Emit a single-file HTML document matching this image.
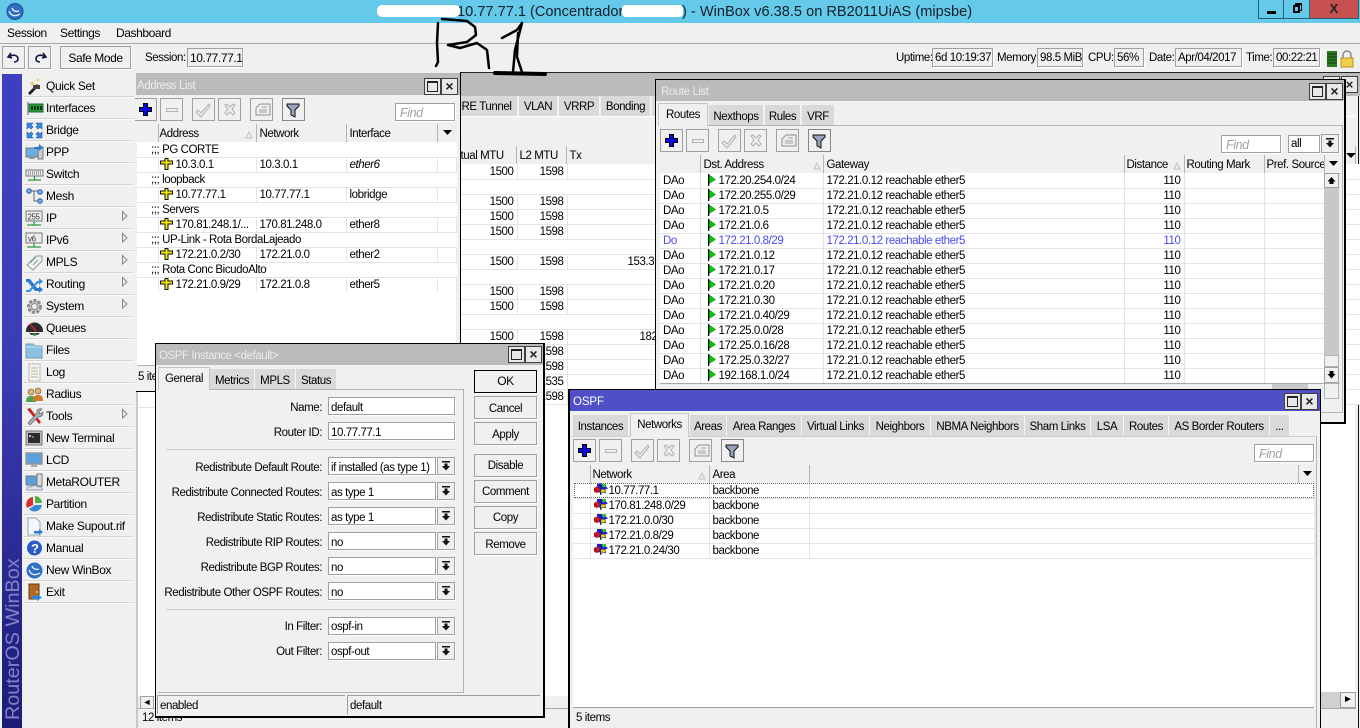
<!DOCTYPE html>
<html><head><meta charset="utf-8"><title>WinBox</title>
<style>
*{box-sizing:border-box}
html,body{margin:0;padding:0;width:1360px;height:728px;overflow:hidden;background:#f0f0f0}
body{position:relative;font:11.5px/14px "Liberation Sans",sans-serif;letter-spacing:-.42px;color:#000}
.a,.t,.tab,.b,.f,.g,.s{position:absolute}
.t{white-space:nowrap}
.g{background:#bbb}
.tl{position:absolute;color:#ececec;white-space:nowrap;line-height:14px}
.tab{background:#d9d9d9;text-align:center;white-space:nowrap;border-right:1px solid #f4f4f4;padding-top:2px}
.tab.on{background:#f0f0f0;border:1px solid #c4c4c4;border-bottom:0;z-index:2;padding-top:1px}
.b{background:#f0f0f0;border:1px solid #a0a0a0;text-align:center;white-space:nowrap;box-shadow:1px 1px 0 #fff}
.f{background:#fff;border:1px solid #a0a0a0;padding:1px 0 0 2px;white-space:nowrap;overflow:hidden;box-shadow:1px 1px 0 #fff}
.s{background:#f0f0f0;border:1px solid #a0a0a0;padding:1px 0 0 2px;white-space:nowrap;overflow:hidden}
.find{color:#a0a0a0;font-style:italic;font-size:12.5px;padding-left:4px}
table{position:absolute;border-collapse:collapse;table-layout:fixed;background:#fff}
td{height:15px;padding:0 0 0 3px;border:1px solid #e4e4e4;border-width:0 1px 1px 0;white-space:nowrap;overflow:hidden;line-height:14px}
tr:first-child td{padding-top:2px;line-height:12px}
.hd tr:first-child td{background:#f0f0f0;height:18px;border:0;border-right:1px solid #b4b4b4;border-bottom:1px solid #a0a0a0;padding-top:3px;line-height:14px;vertical-align:top}
td.n{text-align:right;padding-right:3px;padding-left:0}
td.c{padding-left:14px;border-right:0}
.bl td{color:#4a4af0}
td svg{vertical-align:1px;margin:-3px 3px -3px 0}
td svg.i{margin-left:-2px}
.hd td svg{margin:0;vertical-align:0}
.wb{position:absolute;width:17px;height:17px;border:1px solid #404040;background:#e8e8e8}
.m{position:absolute;left:46px;white-space:nowrap;letter-spacing:-.35px;font-size:12px}
.sep{position:absolute;left:24px;width:110px;height:1px;background:#d4d4d4;box-shadow:0 1px 0 #fafafa}
</style></head>
<body>
<svg width="0" height="0" style="position:absolute">
<defs>
<symbol id="da" viewBox="0 0 16 16"><path fill="#111" d="M4 3h8v1.500H4zM6.500 5.500h3V8H12l-4 4.500L4 8h2.500z"/></symbol>
<symbol id="fl" viewBox="0 0 9 12"><path d="M1 0h1.300v12H1z" fill="#000"/><path d="M2.300 1 8.500 5.500 2.300 9.500z" fill="#0c0" stroke="#060" stroke-width=".5"/></symbol>
<symbol id="ad" viewBox="0 0 13 12"><path d="M5 0.500h3v2.500h4.500v3H8v5.500H5V6H.5V3H5z" fill="#f4e60a" stroke="#111"/></symbol>
<symbol id="st" viewBox="0 0 14 14"><path d="M7 0l2 2.500 3-1 0 3 2 2-3 1 .5 3.500-3-1-2 3-1-3-3.500 1 1-3.500L0 6l3-1.500L3 1l3 1z" fill="#2020d0"/><path d="M7 0l2 2.500 3-1 0 3-3 1z" fill="#30c030"/><path d="M0 6l3-1.500L6 7 3.500 11 0 10z" fill="#e01818"/><path d="M7 7l4 .5.500 3.500-3-1-2 3z" fill="#eed810" stroke="#222" stroke-width=".6"/><path d="M0 7 3 9M6 2 8 7" stroke="#111" stroke-width=".6" fill="none"/></symbol>
<symbol id="tb" viewBox="0 0 172 24">
<g fill="#f0f0f0" stroke="#a0a0a0"><rect x=".5" y=".5" width="22" height="22"/><rect x="26.500" y=".5" width="22" height="22"/><rect x="58.500" y=".5" width="22" height="22"/><rect x="84.500" y=".5" width="22" height="22"/><rect x="116.500" y=".5" width="22" height="22"/><rect x="148.500" y=".5" width="22" height="22" stroke="#888"/></g>
<path d="M9.500 5.500h4v4h4v4h-4v4h-4v-4h-4v-4h4z" fill="#0a0ae0" stroke="#000"/>
<rect x="32.500" y="10.500" width="11" height="3" fill="#eee" stroke="#b4b4b4"/>
<path d="M64 12l3 3 8-9 1 2-9 11-5-5z" fill="#eee" stroke="#b0b0b0"/>
<path d="M91 7l2-1 3 3 3-3 2 1-3 4 3 4-2 2-3-3-3 3-2-2 3-4z" fill="#eee" stroke="#b0b0b0"/>
<path d="M122 10l4-4h10v11h-14z" fill="#eee" stroke="#909090"/><path d="M125 12h8M128 9h5M125 14h8" stroke="#a0a0a0"/>
<path d="M153 6h12v2l-4 4v7l-4-2v-5l-4-4z" fill="#9aa4c0" stroke="#111"/>
</symbol>
</defs>
</svg>

<!-- main bars -->
<div class="a" style="left:0;top:0;width:1360px;height:23px;background:#65c9ea"></div>
<div class="t" style="left:457px;top:4px;font-size:14.6px;letter-spacing:0;line-height:16px;color:#12202a">10.77.77.1 (Concentrador</div>
<div class="a" style="left:377px;top:5px;width:83px;height:12px;background:#fff;border-radius:5px"></div>
<div class="a" style="left:622px;top:5px;width:61px;height:12px;background:#fff;border-radius:4px"></div>
<div class="t" style="left:682px;top:4px;font-size:14.6px;letter-spacing:0;line-height:16px;color:#12202a">) - WinBox v6.38.5 on RB2011UiAS (mipsbe)</div>
<svg class="a" style="left:6px;top:3px" width="18" height="18"><circle cx="9" cy="8.500" r="8" fill="#2f6fc4" stroke="#1c4c94"/><path d="M3 8c2 5 6 6 11 3M6 5c1 3 4 4 7 3" stroke="#e8f2ff" stroke-width="1.300" fill="none"/></svg>
<!-- win buttons -->
<div class="a" style="left:1258px;top:0;width:26px;height:19px;border:1px solid #25607a;border-top:0;background:#65c9ea"></div>
<div class="a" style="left:1267px;top:11px;width:9px;height:3px;background:#000"></div>
<div class="a" style="left:1284px;top:0;width:26px;height:19px;border:1px solid #25607a;border-left:0;border-top:0;background:#65c9ea"></div>
<div class="a" style="left:1295px;top:3px;width:7px;height:8px;border:1px solid #000;border-top-width:2px"></div>
<div class="a" style="left:1293px;top:5px;width:7px;height:8px;border:2px solid #000;background:#65c9ea"></div>
<div class="a" style="left:1310px;top:0;width:49px;height:19px;background:#c75050;border-bottom:1px solid #25607a;border-right:1px solid #25607a;text-align:center;font:bold 13px/18px 'Liberation Sans',sans-serif;color:#222;letter-spacing:0">X</div>

<div class="t" style="left:7px;top:26px;font-size:12px">Session</div>
<div class="t" style="left:60px;top:26px;font-size:12px">Settings</div>
<div class="t" style="left:116px;top:26px;font-size:12px">Dashboard</div>
<div class="a" style="left:0;top:43px;width:1360px;height:1px;background:#a8a8a8"></div>

<div class="b" style="left:2px;top:46px;width:23px;height:23px"></div>
<svg class="a" style="left:6px;top:50px" width="16" height="16"><path d="M5 3L2 7l4 1M3 7c4-3 9-2 9 2 0 2-2 3-4 3" fill="none" stroke="#101840" stroke-width="1.600"/></svg>
<div class="b" style="left:28px;top:46px;width:23px;height:23px"></div>
<svg class="a" style="left:32px;top:50px" width="16" height="16"><path d="M11 3l3 4-4 1M13 7C9 4 4 5 4 9c0 2 2 3 4 3" fill="none" stroke="#101840" stroke-width="1.600"/></svg>
<div class="b" style="left:60px;top:46px;width:71px;height:23px;line-height:22px;font-size:12px">Safe Mode</div>
<div class="t" style="left:145px;top:51px">Session:</div>
<div class="f" style="left:187px;top:48px;width:56px;height:19px;line-height:17px;background:#f0f0f0;font-size:12px">10.77.77.1</div>

<div class="t" style="left:896px;top:51px">Uptime:</div><div class="f" style="left:932px;top:48px;width:61px;height:19px;line-height:17px;background:#f0f0f0">6d 10:19:37</div>
<div class="t" style="left:997px;top:51px">Memory:</div><div class="f" style="left:1037px;top:48px;width:46px;height:19px;line-height:17px;background:#f0f0f0">98.5 MiB</div>
<div class="t" style="left:1088px;top:51px">CPU:</div><div class="f" style="left:1114px;top:48px;width:30px;height:19px;line-height:17px;background:#f0f0f0">56%</div>
<div class="t" style="left:1149px;top:51px">Date:</div><div class="f" style="left:1175px;top:48px;width:67px;height:19px;line-height:17px;background:#f0f0f0">Apr/04/2017</div>
<div class="t" style="left:1246px;top:51px">Time:</div><div class="f" style="left:1273px;top:48px;width:47px;height:19px;line-height:17px;background:#f0f0f0">00:22:21</div>
<svg class="a" style="left:1326px;top:50px" width="30" height="18"><path d="M1 1h10v16H1z" fill="#2e7a1e"/><path d="M1 4h10M1 7h10M1 10h10M1 13h10" stroke="#143a10"/><path d="M17 8V5a4 4 0 0 1 8 0v3" fill="none" stroke="#888" stroke-width="1.500"/><rect x="15" y="8" width="12" height="9" fill="#f0d048" stroke="#b89020"/></svg>

<!-- background interface window -->
<div class="a" style="left:136px;top:72px;width:1224px;height:1px;background:#222"></div>
<div class="g" style="left:136px;top:73px;width:1224px;height:23px"></div>
<div class="wb" style="left:1323px;top:76px"></div><div class="wb" style="left:1341px;top:76px;text-align:center;font:bold 13px/15px 'Liberation Sans',sans-serif;letter-spacing:0;color:#222">×</div>
<div class="a" style="left:136px;top:96px;width:1224px;height:632px;background:#f0f0f0"></div>
<div class="a" style="left:1358px;top:96px;width:1px;height:632px;background:#111"></div>
<div class="tab" style="left:456px;top:96px;width:62px;height:20px;line-height:21px;padding-top:1px">RE Tunnel</div>
<div class="tab" style="left:519px;top:96px;width:39px;height:20px;line-height:21px;padding-top:1px">VLAN</div>
<div class="tab" style="left:559px;top:96px;width:41px;height:20px;line-height:21px;padding-top:1px">VRRP</div>
<div class="tab" style="left:601px;top:96px;width:50px;height:20px;line-height:21px;padding-top:1px">Bonding</div>
<div class="tab" style="left:652px;top:96px;width:10px;height:20px"></div>
<div class="a" style="left:138px;top:116px;width:1218px;height:1px;background:#fff"></div>
<table class="hd" style="left:138px;top:146px;width:1217px"><colgroup><col style="width:319px"><col style="width:59px"><col style="width:50px"><col style="width:789px"></colgroup>
<tr><td></td><td>tual MTU</td><td>L2 MTU</td><td>Tx</td></tr></table>
<div class="a" style="left:138px;top:164px;width:1217px;height:532px;background:#fff"></div>
<svg class="a" style="left:1346px;top:147px" width="10" height="16"><path d="M0 6h10L5 11z" fill="#000"/></svg>
<table style="left:457px;top:164px;width:903px"><colgroup><col style="width:60px"><col style="width:50px"><col style="width:793px"></colgroup>
<tr><td class="n">1500</td><td class="n">1598</td><td></td></tr>
<tr><td style="border-right:0"></td><td style="border-right:0"></td><td></td></tr>
<tr><td class="n">1500</td><td class="n">1598</td><td></td></tr>
<tr><td class="n">1500</td><td class="n">1598</td><td></td></tr>
<tr><td class="n">1500</td><td class="n">1598</td><td></td></tr>
<tr><td style="border-right:0"></td><td style="border-right:0"></td><td></td></tr>
<tr><td class="n">1500</td><td class="n">1598</td><td style="padding-left:60px">153.3</td></tr>
<tr><td style="border-right:0"></td><td style="border-right:0"></td><td></td></tr>
<tr><td class="n">1500</td><td class="n">1598</td><td></td></tr>
<tr><td class="n">1500</td><td class="n">1598</td><td></td></tr>
<tr><td style="border-right:0"></td><td style="border-right:0"></td><td></td></tr>
<tr><td class="n">1500</td><td class="n">1598</td><td style="padding-left:72px">182</td></tr>
<tr><td class="n"></td><td class="n">1598</td><td></td></tr>
<tr><td class="n"></td><td class="n">1598</td><td></td></tr>
<tr><td class="n"></td><td class="n">1535</td><td></td></tr>
<tr><td class="n"></td><td class="n">1598</td><td></td></tr>
</table>
<div class="a" style="left:136px;top:391px;width:2px;height:337px;background:#c8c8c8"></div>
<div class="a" style="left:138px;top:407px;width:20px;height:1px;background:#e4e4e4"></div>
<div class="a" style="left:1320px;top:692px;width:20px;height:16px;background:#d0d0d0"></div>
<div class="b" style="left:1340px;top:692px;width:16px;height:16px;line-height:14px;font-size:10px;letter-spacing:0">►</div>
<div class="b" style="left:140px;top:696px;width:14px;height:13px;line-height:11px;font-size:9px;letter-spacing:0">◄</div>
<div class="a" style="left:138px;top:708px;width:1218px;height:1px;background:#a8a8a8"></div>
<div class="t" style="left:142px;top:711px">12 items</div>

<!-- Address List -->
<div class="a" style="left:136px;top:72px;width:325px;height:320px;background:#f0f0f0;border-right:1px solid #000;border-bottom:1px solid #000"></div>
<div class="g" style="left:136px;top:73px;width:324px;height:22px"></div>
<div class="tl" style="left:137px;top:79px">Address List</div>
<div class="wb" style="left:424px;top:78px;padding:2px"><div style="width:11px;height:11px;border:1px solid #222;border-top-width:2px"></div></div>
<div class="wb" style="left:441px;top:78px;text-align:center;font:bold 14px/15px 'Liberation Sans',sans-serif;letter-spacing:0;color:#222">×</div>
<svg class="a" style="left:134px;top:98px" width="172" height="24"><use href="#tb"/></svg>
<div class="f find" style="left:395px;top:103px;width:60px;height:18px;line-height:17px">Find</div>
<table class="hd" style="left:137px;top:124px;width:319px"><colgroup><col style="width:21px"><col style="width:98px"><col style="width:90px"><col style="width:91px"><col style="width:19px"></colgroup>
<tr><td></td><td style="padding-left:1px">Address</td><td>Network</td><td>Interface</td><td style="border-right:0;padding:3px 0 0 4px"><svg width="11" height="8"><path d="M1 1h9L5.500 6z" fill="#000"/></svg></td></tr></table>
<svg class="a" style="left:245px;top:131px" width="8" height="8"><path d="M4 1l3 6H1z" fill="none" stroke="#c0c0c0"/></svg>
<table style="left:137px;top:142px;width:319px"><colgroup><col style="width:21px"><col style="width:98px"><col style="width:90px"><col style="width:91px"><col style="width:19px"></colgroup>
<tr><td class="c" colspan="5">;;; PG CORTE</td></tr>
<tr><td></td><td><svg class="i" width="13" height="12"><use href="#ad"/></svg>10.3.0.1</td><td>10.3.0.1</td><td><i>ether6</i></td><td></td></tr>
<tr><td class="c" colspan="5">;;; loopback</td></tr>
<tr><td></td><td><svg class="i" width="13" height="12"><use href="#ad"/></svg>10.77.77.1</td><td>10.77.77.1</td><td>lobridge</td><td></td></tr>
<tr><td class="c" colspan="5">;;; Servers</td></tr>
<tr><td></td><td><svg class="i" width="13" height="12"><use href="#ad"/></svg>170.81.248.1/...</td><td>170.81.248.0</td><td>ether8</td><td></td></tr>
<tr><td class="c" colspan="5">;;; UP-Link - Rota BordaLajeado</td></tr>
<tr><td></td><td><svg class="i" width="13" height="12"><use href="#ad"/></svg>172.21.0.2/30</td><td>172.21.0.0</td><td>ether2</td><td></td></tr>
<tr><td class="c" colspan="5">;;; Rota Conc BicudoAlto</td></tr>
<tr><td></td><td><svg class="i" width="13" height="12"><use href="#ad"/></svg>172.21.0.9/29</td><td>172.21.0.8</td><td>ether5</td><td></td></tr>
</table>
<div class="a" style="left:137px;top:292px;width:319px;height:74px;background:#fff;border-bottom:1px solid #b0b0b0"></div>
<div class="t" style="left:138px;top:370px">5 items</div>

<!-- Route List -->
<div class="a" style="left:655px;top:79px;width:691px;height:345px;background:#f0f0f0;border:1px solid #000;border-width:1px 2px 2px 1px"></div>
<div class="g" style="left:656px;top:80px;width:688px;height:21px"></div>
<div class="tl" style="left:661px;top:85px">Route List</div>
<div class="wb" style="left:1309px;top:83px;padding:2px"><div style="width:11px;height:11px;border:1px solid #222;border-top-width:2px"></div></div>
<div class="wb" style="left:1326px;top:83px;text-align:center;font:bold 14px/15px 'Liberation Sans',sans-serif;letter-spacing:0;color:#222">×</div>
<div class="a" style="left:658px;top:125px;width:685px;height:288px;border:1px solid #b4b4b4;border-width:1px 1px 1px 0"></div>
<div class="tab on" style="left:658px;top:103px;width:50px;height:23px;line-height:21px">Routes</div>
<div class="tab" style="left:709px;top:105px;width:55px;height:20px;line-height:21px">Nexthops</div>
<div class="tab" style="left:765px;top:105px;width:36px;height:20px;line-height:21px">Rules</div>
<div class="tab" style="left:802px;top:105px;width:33px;height:20px;line-height:21px">VRF</div>
<svg class="a" style="left:660px;top:129px" width="172" height="24"><use href="#tb"/></svg>
<div class="f find" style="left:1221px;top:135px;width:60px;height:18px;line-height:17px">Find</div>
<div class="f" style="left:1288px;top:135px;width:32px;height:18px;line-height:15px">all</div>
<div class="b" style="left:1321px;top:134px;width:18px;height:19px"><svg width="16" height="16" style="display:block"><use href="#da"/></svg></div>
<table class="hd" style="left:660px;top:155px;width:680px"><colgroup><col style="width:40px"><col style="width:123px"><col style="width:301px"><col style="width:60px"><col style="width:80px"><col style="width:60px"><col style="width:16px"></colgroup>
<tr><td></td><td>Dst. Address</td><td>Gateway</td><td style="padding-left:2px">Distance</td><td style="padding-left:2px">Routing Mark</td><td style="padding-left:2px">Pref. Source</td><td style="border-right:0;padding:3px 0 0 3px"><svg width="11" height="8"><path d="M1 1h9L5.500 6z" fill="#000"/></svg></td></tr></table>
<svg class="a" style="left:813px;top:162px" width="8" height="8"><path d="M4 1l3 6H1z" fill="none" stroke="#c0c0c0"/></svg>
<svg class="a" style="left:1173px;top:162px" width="8" height="8"><path d="M4 1l3 6H1z" fill="none" stroke="#c0c0c0"/></svg>
<table style="left:660px;top:173px;width:664px"><colgroup><col style="width:40px"><col style="width:123px"><col style="width:301px"><col style="width:60px"><col style="width:80px"><col style="width:60px"></colgroup>
<tr><td>DAo</td><td style="padding-left:6px"><svg width="9" height="12"><use href="#fl"/></svg>172.20.254.0/24</td><td>172.21.0.12 reachable ether5</td><td class="n">110</td><td></td><td></td></tr>
<tr><td>DAo</td><td style="padding-left:6px"><svg width="9" height="12"><use href="#fl"/></svg>172.20.255.0/29</td><td>172.21.0.12 reachable ether5</td><td class="n">110</td><td></td><td></td></tr>
<tr><td>DAo</td><td style="padding-left:6px"><svg width="9" height="12"><use href="#fl"/></svg>172.21.0.5</td><td>172.21.0.12 reachable ether5</td><td class="n">110</td><td></td><td></td></tr>
<tr><td>DAo</td><td style="padding-left:6px"><svg width="9" height="12"><use href="#fl"/></svg>172.21.0.6</td><td>172.21.0.12 reachable ether5</td><td class="n">110</td><td></td><td></td></tr>
<tr class="bl"><td>Do</td><td style="padding-left:6px"><svg width="9" height="12"><use href="#fl"/></svg>172.21.0.8/29</td><td>172.21.0.12 reachable ether5</td><td class="n">110</td><td></td><td></td></tr>
<tr><td>DAo</td><td style="padding-left:6px"><svg width="9" height="12"><use href="#fl"/></svg>172.21.0.12</td><td>172.21.0.12 reachable ether5</td><td class="n">110</td><td></td><td></td></tr>
<tr><td>DAo</td><td style="padding-left:6px"><svg width="9" height="12"><use href="#fl"/></svg>172.21.0.17</td><td>172.21.0.12 reachable ether5</td><td class="n">110</td><td></td><td></td></tr>
<tr><td>DAo</td><td style="padding-left:6px"><svg width="9" height="12"><use href="#fl"/></svg>172.21.0.20</td><td>172.21.0.12 reachable ether5</td><td class="n">110</td><td></td><td></td></tr>
<tr><td>DAo</td><td style="padding-left:6px"><svg width="9" height="12"><use href="#fl"/></svg>172.21.0.30</td><td>172.21.0.12 reachable ether5</td><td class="n">110</td><td></td><td></td></tr>
<tr><td>DAo</td><td style="padding-left:6px"><svg width="9" height="12"><use href="#fl"/></svg>172.21.0.40/29</td><td>172.21.0.12 reachable ether5</td><td class="n">110</td><td></td><td></td></tr>
<tr><td>DAo</td><td style="padding-left:6px"><svg width="9" height="12"><use href="#fl"/></svg>172.25.0.0/28</td><td>172.21.0.12 reachable ether5</td><td class="n">110</td><td></td><td></td></tr>
<tr><td>DAo</td><td style="padding-left:6px"><svg width="9" height="12"><use href="#fl"/></svg>172.25.0.16/28</td><td>172.21.0.12 reachable ether5</td><td class="n">110</td><td></td><td></td></tr>
<tr><td>DAo</td><td style="padding-left:6px"><svg width="9" height="12"><use href="#fl"/></svg>172.25.0.32/27</td><td>172.21.0.12 reachable ether5</td><td class="n">110</td><td></td><td></td></tr>
<tr><td>DAo</td><td style="padding-left:6px"><svg width="9" height="12"><use href="#fl"/></svg>192.168.1.0/24</td><td>172.21.0.12 reachable ether5</td><td class="n">110</td><td></td><td></td></tr>
</table>
<div class="a" style="left:1324px;top:188px;width:15px;height:179px;background:#c8c8c8"></div>
<div class="b" style="left:1324px;top:173px;width:15px;height:15px;box-shadow:none"><svg width="13" height="13" style="display:block"><path d="M6.500 3l4 4.500H8.500V10h-4V7.500H2.500z" fill="#000"/></svg></div>
<div class="a" style="left:1324px;top:355px;width:15px;height:12px;background:#f0f0f0;border:1px solid #b4b4b4"></div>
<div class="b" style="left:1324px;top:367px;width:15px;height:16px;box-shadow:none"><svg width="13" height="14" style="display:block"><path d="M4.500 3h4v3h2l-4 4.500-4-4.500h2z" fill="#000"/></svg></div>
<div class="a" style="left:660px;top:383px;width:680px;height:1px;background:#a8a8a8"></div>
<div class="a" style="left:1272px;top:384px;width:36px;height:8px;background:#c8c8c8"></div>
<div class="a" style="left:1324px;top:383px;width:15px;height:16px;border:1px solid #b4b4b4"></div>

<!-- OSPF Instance -->
<div class="a" style="left:155px;top:343px;width:390px;height:375px;background:#f0f0f0;border:1px solid #000;border-width:1px 2px 2px 1px"></div>
<div class="g" style="left:156px;top:344px;width:387px;height:21px"></div>
<div class="tl" style="left:159px;top:349px">OSPF Instance &lt;default&gt;</div>
<div class="wb" style="left:508px;top:346px;padding:2px"><div style="width:11px;height:11px;border:1px solid #222;border-top-width:2px"></div></div>
<div class="wb" style="left:525px;top:346px;text-align:center;font:bold 14px/15px 'Liberation Sans',sans-serif;letter-spacing:0;color:#222">×</div>
<div class="a" style="left:158px;top:389px;width:306px;height:304px;border:1px solid #b4b4b4;border-width:1px 1px 1px 0"></div>
<div class="tab on" style="left:158px;top:367px;width:52px;height:23px;line-height:21px">General</div>
<div class="tab" style="left:210px;top:369px;width:45px;height:20px;line-height:21px">Metrics</div>
<div class="tab" style="left:255px;top:369px;width:41px;height:20px;line-height:21px">MPLS</div>
<div class="tab" style="left:296px;top:369px;width:41px;height:20px;line-height:21px">Status</div>

<div class="t" style="right:1038px;top:401px">Name:</div><div class="f" style="left:328px;top:397px;width:127px;height:18px;line-height:19px">default</div>
<div class="t" style="right:1038px;top:426px">Router ID:</div><div class="f" style="left:328px;top:422px;width:127px;height:18px;line-height:19px">10.77.77.1</div>
<div class="a" style="left:166px;top:449px;width:289px;height:1px;background:#d0d0d0"></div>

<div class="t" style="right:1038px;top:461px">Redistribute Default Route:</div><div class="f" style="left:328px;top:457px;width:108px;height:18px;line-height:19px">if installed (as type 1)</div><div class="b" style="left:437px;top:457px;width:18px;height:18px"><svg width="16" height="16" style="display:block"><use href="#da"/></svg></div>
<div class="t" style="right:1038px;top:486px">Redistribute Connected Routes:</div><div class="f" style="left:328px;top:482px;width:108px;height:18px;line-height:19px">as type 1</div><div class="b" style="left:437px;top:482px;width:18px;height:18px"><svg width="16" height="16" style="display:block"><use href="#da"/></svg></div>
<div class="t" style="right:1038px;top:511px">Redistribute Static Routes:</div><div class="f" style="left:328px;top:507px;width:108px;height:18px;line-height:19px">as type 1</div><div class="b" style="left:437px;top:507px;width:18px;height:18px"><svg width="16" height="16" style="display:block"><use href="#da"/></svg></div>
<div class="t" style="right:1038px;top:536px">Redistribute RIP Routes:</div><div class="f" style="left:328px;top:532px;width:108px;height:18px;line-height:19px">no</div><div class="b" style="left:437px;top:532px;width:18px;height:18px"><svg width="16" height="16" style="display:block"><use href="#da"/></svg></div>
<div class="t" style="right:1038px;top:561px">Redistribute BGP Routes:</div><div class="f" style="left:328px;top:557px;width:108px;height:18px;line-height:19px">no</div><div class="b" style="left:437px;top:557px;width:18px;height:18px"><svg width="16" height="16" style="display:block"><use href="#da"/></svg></div>
<div class="t" style="right:1038px;top:586px">Redistribute Other OSPF Routes:</div><div class="f" style="left:328px;top:582px;width:108px;height:18px;line-height:19px">no</div><div class="b" style="left:437px;top:582px;width:18px;height:18px"><svg width="16" height="16" style="display:block"><use href="#da"/></svg></div>
<div class="a" style="left:166px;top:609px;width:289px;height:1px;background:#d0d0d0"></div>
<div class="t" style="right:1038px;top:620px">In Filter:</div><div class="f" style="left:328px;top:617px;width:108px;height:18px;line-height:17px">ospf-in</div><div class="b" style="left:437px;top:617px;width:18px;height:18px"><svg width="16" height="16" style="display:block"><use href="#da"/></svg></div>
<div class="t" style="right:1038px;top:645px">Out Filter:</div><div class="f" style="left:328px;top:642px;width:108px;height:18px;line-height:17px">ospf-out</div><div class="b" style="left:437px;top:642px;width:18px;height:18px"><svg width="16" height="16" style="display:block"><use href="#da"/></svg></div>

<div class="b" style="left:474px;top:370px;width:63px;height:23px;line-height:21px;border-color:#000;font-size:12px">OK</div>
<div class="b" style="left:474px;top:396px;width:63px;height:23px;line-height:24px">Cancel</div>
<div class="b" style="left:474px;top:422px;width:63px;height:23px;line-height:24px">Apply</div>
<div class="b" style="left:474px;top:454px;width:63px;height:23px;line-height:23px">Disable</div>
<div class="b" style="left:474px;top:480px;width:63px;height:23px;line-height:23px">Comment</div>
<div class="b" style="left:474px;top:506px;width:63px;height:23px;line-height:23px">Copy</div>
<div class="b" style="left:474px;top:532px;width:63px;height:23px;line-height:24px">Remove</div>
<div class="s" style="left:157px;top:695px;width:188px;height:19px;line-height:19px;border-width:1px 0 0 1px">enabled</div>
<div class="s" style="left:347px;top:695px;width:193px;height:19px;line-height:19px;border-width:1px 0 0 1px">default</div>

<!-- OSPF -->
<div class="a" style="left:568px;top:389px;width:753px;height:339px;background:#f0f0f0;border:1px solid #000;border-width:1px 1px 0 2px"></div>
<div class="a" style="left:570px;top:390px;width:750px;height:21px;background:#4f50c8"></div>
<div class="tl" style="left:573px;top:395px;color:#fff;letter-spacing:-.1px">OSPF</div>
<div class="wb" style="left:1284px;top:393px;padding:2px"><div style="width:11px;height:11px;border:1px solid #222;border-top-width:2px"></div></div>
<div class="wb" style="left:1301px;top:393px;text-align:center;font:bold 14px/15px 'Liberation Sans',sans-serif;letter-spacing:0;color:#222">×</div>
<div class="a" style="left:571px;top:436px;width:746px;height:292px;border-top:1px solid #d0d0d0;border-right:1px solid #b4b4b4"></div>
<div class="tab" style="left:573px;top:415px;width:56px;height:21px;line-height:21px">Instances</div>
<div class="tab on" style="left:630px;top:413px;width:59px;height:24px;line-height:21px">Networks</div>
<div class="tab" style="left:690px;top:415px;width:37px;height:21px;line-height:21px">Areas</div>
<div class="tab" style="left:727px;top:415px;width:75px;height:21px;line-height:21px">Area Ranges</div>
<div class="tab" style="left:802px;top:415px;width:68px;height:21px;line-height:21px">Virtual Links</div>
<div class="tab" style="left:870px;top:415px;width:61px;height:21px;line-height:21px">Neighbors</div>
<div class="tab" style="left:931px;top:415px;width:94px;height:21px;line-height:21px">NBMA Neighbors</div>
<div class="tab" style="left:1025px;top:415px;width:66px;height:21px;line-height:21px">Sham Links</div>
<div class="tab" style="left:1091px;top:415px;width:33px;height:21px;line-height:21px">LSA</div>
<div class="tab" style="left:1124px;top:415px;width:45px;height:21px;line-height:21px">Routes</div>
<div class="tab" style="left:1169px;top:415px;width:101px;height:21px;line-height:21px">AS Border Routers</div>
<div class="tab" style="left:1270px;top:415px;width:20px;height:21px;line-height:21px">...</div>
<svg class="a" style="left:573px;top:439px" width="172" height="24"><use href="#tb"/></svg>
<div class="f find" style="left:1254px;top:444px;width:60px;height:18px;line-height:17px">Find</div>
<table class="hd" style="left:573px;top:465px;width:741px"><colgroup><col style="width:17px"><col style="width:119px"><col style="width:100px"><col style="width:489px"><col style="width:16px"></colgroup>
<tr><td></td><td style="padding-left:2px">Network</td><td>Area</td><td style="border-right:1px solid #b4b4b4"></td><td style="border-right:0;padding:3px 0 0 3px"><svg width="11" height="8"><path d="M1 1h9L5.500 6z" fill="#000"/></svg></td></tr></table>
<svg class="a" style="left:698px;top:472px" width="8" height="8"><path d="M4 1l3 6H1z" fill="none" stroke="#c0c0c0"/></svg>
<div class="a" style="left:573px;top:483px;width:741px;height:225px;background:#fff;border-bottom:1px solid #a0a0a0"></div>
<table style="left:573px;top:483px;width:741px"><colgroup><col style="width:17px"><col style="width:119px"><col style="width:100px"><col style="width:505px"></colgroup>
<tr><td></td><td style="padding-left:3px"><svg width="14" height="14" style="margin-right:1px"><use href="#st"/></svg>10.77.77.1</td><td>backbone</td><td></td></tr>
<tr><td></td><td style="padding-left:3px"><svg width="14" height="14" style="margin-right:1px"><use href="#st"/></svg>170.81.248.0/29</td><td>backbone</td><td></td></tr>
<tr><td></td><td style="padding-left:3px"><svg width="14" height="14" style="margin-right:1px"><use href="#st"/></svg>172.21.0.0/30</td><td>backbone</td><td></td></tr>
<tr><td></td><td style="padding-left:3px"><svg width="14" height="14" style="margin-right:1px"><use href="#st"/></svg>172.21.0.8/29</td><td>backbone</td><td></td></tr>
<tr><td></td><td style="padding-left:3px"><svg width="14" height="14" style="margin-right:1px"><use href="#st"/></svg>172.21.0.24/30</td><td>backbone</td><td></td></tr>
</table>
<div class="a" style="left:574px;top:483px;width:740px;height:15px;border:1px dotted #666"></div>
<div class="t" style="left:576px;top:711px">5 items</div>

<!-- hand scribble -->
<svg class="a" style="left:0;top:0;z-index:5" width="1360" height="80">
<g fill="none" stroke="#000" stroke-width="2.500" stroke-linecap="round" stroke-linejoin="round">
<path d="M438 23 437 43 438 62 436 66"/>
<path d="M442 19 467 21 475 27 476 35 467 42 448 45 460 48 477 43 487 50 489 68"/>
<path d="M502 38 517 30 522 23 515 50 513 72"/>
<path d="M518 33 517 57 522 72"/>
<path d="M495 73 545 74" stroke-width="4"/>
</g></svg>

<!-- side menu -->
<div class="a" style="left:0;top:72px;width:135px;height:656px;background:#f0f0f0;z-index:6"></div>
<div class="a" style="left:2px;top:74px;width:20px;height:654px;background:linear-gradient(#3e3ec2,#3d3db8 40%,#1c1c78);z-index:6"></div>
<div style="position:absolute;left:0;top:0;z-index:7">
<svg class="a" style="left:0;top:0" width="140" height="728">
<text transform="translate(19,720) rotate(-90)" font-family="Liberation Sans" font-size="19.8" fill="#8484c4" letter-spacing="0">RouterOS WinBox</text>
<g transform="translate(26,78)"><path d="M2 15 11 6l2 2-9 9z" fill="#222"/><path d="M7 7h7v4H7z" fill="#444"/><path d="M6 3l1 2 2 .5-2 .5-1 2-.5-2-2-.5 2-.5zM12 0l.7 1.500 1.500.5-1.500.5-.7 1.500-.5-1.500-1.500-.5 1.500-.5z" fill="#e0c030"/></g>
<g transform="translate(26,100)"><path d="M1 2h2v13H1z" fill="#9aa"/><rect x="3" y="4" width="14" height="8" fill="#2a9a3a" stroke="#1c6a2a"/><path d="M5 6h2v4H5zM8 6h2v4H8zM11 6h2v4h-2zM14 6h2v4h-2z" fill="#143a18"/></g>
<g transform="translate(26,122)" fill="#3a88dc" stroke="#1a5aa8" stroke-width=".6"><path d="M1 1h6l-2 2 2 2-2 2-2-2-2 2z"/><path d="M16 1v6l-2-2-2 2-2-2 2-2-2-2z"/><path d="M1 16v-6l2 2 2-2 2 2-2 2 2 2z"/><path d="M16 16h-6l2-2-2-2 2-2 2 2 2-2z"/></g>
<g transform="translate(26,144)"><rect x="0" y="4" width="12" height="9" fill="#6ab0e8" stroke="#777"/><rect x="3" y="13" width="6" height="2" fill="#999"/><rect x="12" y="3" width="5" height="12" fill="#ccc" stroke="#777"/><path d="M8 3h5V0l4 3.500L13 7V5H8z" fill="#2a7ad0"/></g>
<g transform="translate(26,166)"><rect x="0" y="4" width="17" height="6" fill="#eee" stroke="#777"/><path d="M2 6h13M2 8h13" stroke="#555" stroke-dasharray="1 1"/><path d="M8.500 10v4M2 14h13" stroke="#2a9a3a" stroke-width="1.300"/></g>
<g transform="translate(26,188)"><g fill="#7ab0ee" stroke="#2a5aa8"><circle cx="3" cy="3" r="2.300"/><circle cx="14" cy="4" r="2.300"/><circle cx="14" cy="13" r="2.300"/></g><path d="M5.500 3h6M8 3v10h3.500" fill="none" stroke="#666"/></g>
<g transform="translate(26,210)"><rect x="0" y="1" width="16" height="10" fill="#eee" stroke="#777"/><text x="1.500" y="9.500" font-family="Liberation Sans" font-size="8" fill="#333">255</text><path d="M8 11v4M1 15h14" stroke="#2a9a3a" stroke-width="1.300"/></g>
<g transform="translate(26,232)"><rect x="0" y="1" width="16" height="10" fill="#eee" stroke="#777"/><text x="2" y="9.500" font-family="Liberation Sans" font-size="8" fill="#333">v6</text><path d="M8 11v4M1 15h14" stroke="#2a9a3a" stroke-width="1.300"/></g>
<g transform="translate(26,254)" fill="#eef2f0" stroke="#8a9a9a"><path d="M1 11 10 2h6v5l-9 9z"/><path d="M4 9l6-6M7 11l5-5" fill="none"/></g>
<g transform="translate(26,276)"><path d="M0 3h4l7 9h2v-2l4 3.500-4 3.500v-2h-4L2 6H0z" fill="#2a78d0"/><path d="M0 14h3l8-9h2V2l4 3.500-4 3.500V7h-1l-8 9H0z" fill="#3a90e0"/></g>
<g transform="translate(26,298)"><circle cx="8.500" cy="8.500" r="6" fill="#c8c8c8" stroke="#8a8a8a" stroke-width="3" stroke-dasharray="3 1.500"/><circle cx="8.500" cy="8.500" r="3" fill="#eee" stroke="#8a8a8a"/></g>
<g transform="translate(26,320)"><path d="M0 11a8.500 8.500 0 0 1 17 0v1H0z" fill="#2c2c2c"/><path d="M4 4l6 7" stroke="#e02020" stroke-width="1.400"/><path d="M3 13h11l-2 2H5z" fill="#444"/><path d="M8.500 13v3" stroke="#2a9a3a" stroke-width="2"/></g>
<g transform="translate(26,342)"><path d="M0 2h7l2 2h7v12H0z" fill="#8cc0e0" stroke="#7a9ab0"/><path d="M0 5h16" stroke="#c8e4f4"/></g>
<g transform="translate(26,364)"><path d="M3 0h11v17H3z" fill="#f4f4ea" stroke="#aaa" stroke-dasharray="2 .6"/><path d="M5 4h7M5 7h7M5 10h7M5 13h7" stroke="#a8b8a8"/></g>
<g transform="translate(26,386)"><circle cx="5" cy="6" r="3" fill="#e0b080" stroke="#7a5a30" stroke-width=".6"/><path d="M0 16c0-5 2-6 5-6s5 1 5 6z" fill="#50a050"/><circle cx="12" cy="5" r="3" fill="#e0b080" stroke="#7a4a20" stroke-width=".6"/><path d="M7 15c0-5 2-6 5-6s5 1 5 6z" fill="#d07a30"/></g>
<g transform="translate(26,408)"><path d="M1 1l3-1 11 14-2 2z" fill="#d02020"/><path d="M2 15 11 5c-1-3 2-5 5-4l-3 3 1 2 3-2c0 4-2 5-5 5L4 17z" fill="#aab0b8" stroke="#555" stroke-width=".6"/></g>
<g transform="translate(26,430)"><rect x="0" y="1" width="16" height="14" fill="#bbb" stroke="#777"/><rect x="2" y="3" width="12" height="10" fill="#2c2c2c"/><path d="M3 5l2 1-2 1M6 7h2" stroke="#eee" stroke-width=".7" fill="none"/></g>
<g transform="translate(26,452)"><rect x="0" y="1" width="16" height="11" fill="#5aa0dc" stroke="#999" stroke-width="1.500"/><path d="M5 12h6v3H5z" fill="#aaa"/></g>
<g transform="translate(26,474)"><rect x="0" y="2" width="11" height="9" fill="#5aa0dc" stroke="#777"/><rect x="11" y="0" width="5" height="12" fill="#ddd" stroke="#777"/><path d="M1 16c-1-3 2-4 4-3 1-2 6-2 7 0 3-1 5 1 4 3z" fill="#d8e4f0" stroke="#99a"/></g>
<g transform="translate(26,496)"><path d="M7 1A7.500 7.500 0 0 0 1 12l6-3z" fill="#d83030"/><path d="M9 0v7h7A7.500 7.500 0 0 0 9 0z" fill="#50b040"/><path d="M9 9h7a7.500 7.500 0 0 1-13 4z" fill="#3a88d8"/></g>
<g transform="translate(26,518)"><path d="M2 0h8l4 4v13H2z" fill="#f4f8fc" stroke="#8aa"/><path d="M8 13h5v-2l4 3-4 3v-1.500H8z" fill="#2a7ad0"/></g>
<g transform="translate(26,540)"><circle cx="8.500" cy="8" r="7.500" fill="#2a5ac8"/><text x="5" y="13" font-family="Liberation Sans" font-size="13" font-weight="bold" fill="#fff">?</text></g>
<g transform="translate(26,562)"><circle cx="8.500" cy="8.500" r="8" fill="#2f6fc4"/><path d="M3 8c2 5 6 6 11 3M6 4c1 3 4 4 7 3" stroke="#e8f2ff" stroke-width="1.300" fill="none"/></g>
<g transform="translate(26,584)"><path d="M3 0h10v15H3z" fill="#b06a28" stroke="#6a3a10"/><circle cx="11" cy="8" r="1" fill="#f0d048"/><path d="M6 12h5v-2l5 3.500-5 3.500v-2H6z" fill="#2a88e0"/></g>
<g fill="#f0f0f0" stroke="#888"><path d="M122.500 211.500 127 216 122.500 220zM122.500 233.500 127 238 122.500 242zM122.500 255.500 127 260 122.500 264zM122.500 277.500 127 282 122.500 286zM122.500 299.500 127 304 122.500 308zM122.500 409.500 127 414 122.500 418z"/></g>
</svg>
<div class="m" style="top:79px">Quick Set</div><div class="sep" style="top:96px"></div>
<div class="m" style="top:101px">Interfaces</div><div class="sep" style="top:118px"></div>
<div class="m" style="top:123px">Bridge</div><div class="sep" style="top:140px"></div>
<div class="m" style="top:145px">PPP</div><div class="sep" style="top:162px"></div>
<div class="m" style="top:167px">Switch</div><div class="sep" style="top:184px"></div>
<div class="m" style="top:189px">Mesh</div><div class="sep" style="top:206px"></div>
<div class="m" style="top:211px">IP</div><div class="sep" style="top:228px"></div>
<div class="m" style="top:233px">IPv6</div><div class="sep" style="top:250px"></div>
<div class="m" style="top:255px">MPLS</div><div class="sep" style="top:272px"></div>
<div class="m" style="top:277px">Routing</div><div class="sep" style="top:294px"></div>
<div class="m" style="top:299px">System</div><div class="sep" style="top:316px"></div>
<div class="m" style="top:321px">Queues</div><div class="sep" style="top:338px"></div>
<div class="m" style="top:343px">Files</div><div class="sep" style="top:360px"></div>
<div class="m" style="top:365px">Log</div><div class="sep" style="top:382px"></div>
<div class="m" style="top:387px">Radius</div><div class="sep" style="top:404px"></div>
<div class="m" style="top:409px">Tools</div><div class="sep" style="top:426px"></div>
<div class="m" style="top:431px">New Terminal</div><div class="sep" style="top:448px"></div>
<div class="m" style="top:453px">LCD</div><div class="sep" style="top:470px"></div>
<div class="m" style="top:475px">MetaROUTER</div><div class="sep" style="top:492px"></div>
<div class="m" style="top:497px">Partition</div><div class="sep" style="top:514px"></div>
<div class="m" style="top:519px">Make Supout.rif</div><div class="sep" style="top:536px"></div>
<div class="m" style="top:541px">Manual</div><div class="sep" style="top:558px"></div>
<div class="m" style="top:563px">New WinBox</div><div class="sep" style="top:580px"></div>
<div class="m" style="top:585px">Exit</div><div class="sep" style="top:602px"></div>
</div>
</body></html>
